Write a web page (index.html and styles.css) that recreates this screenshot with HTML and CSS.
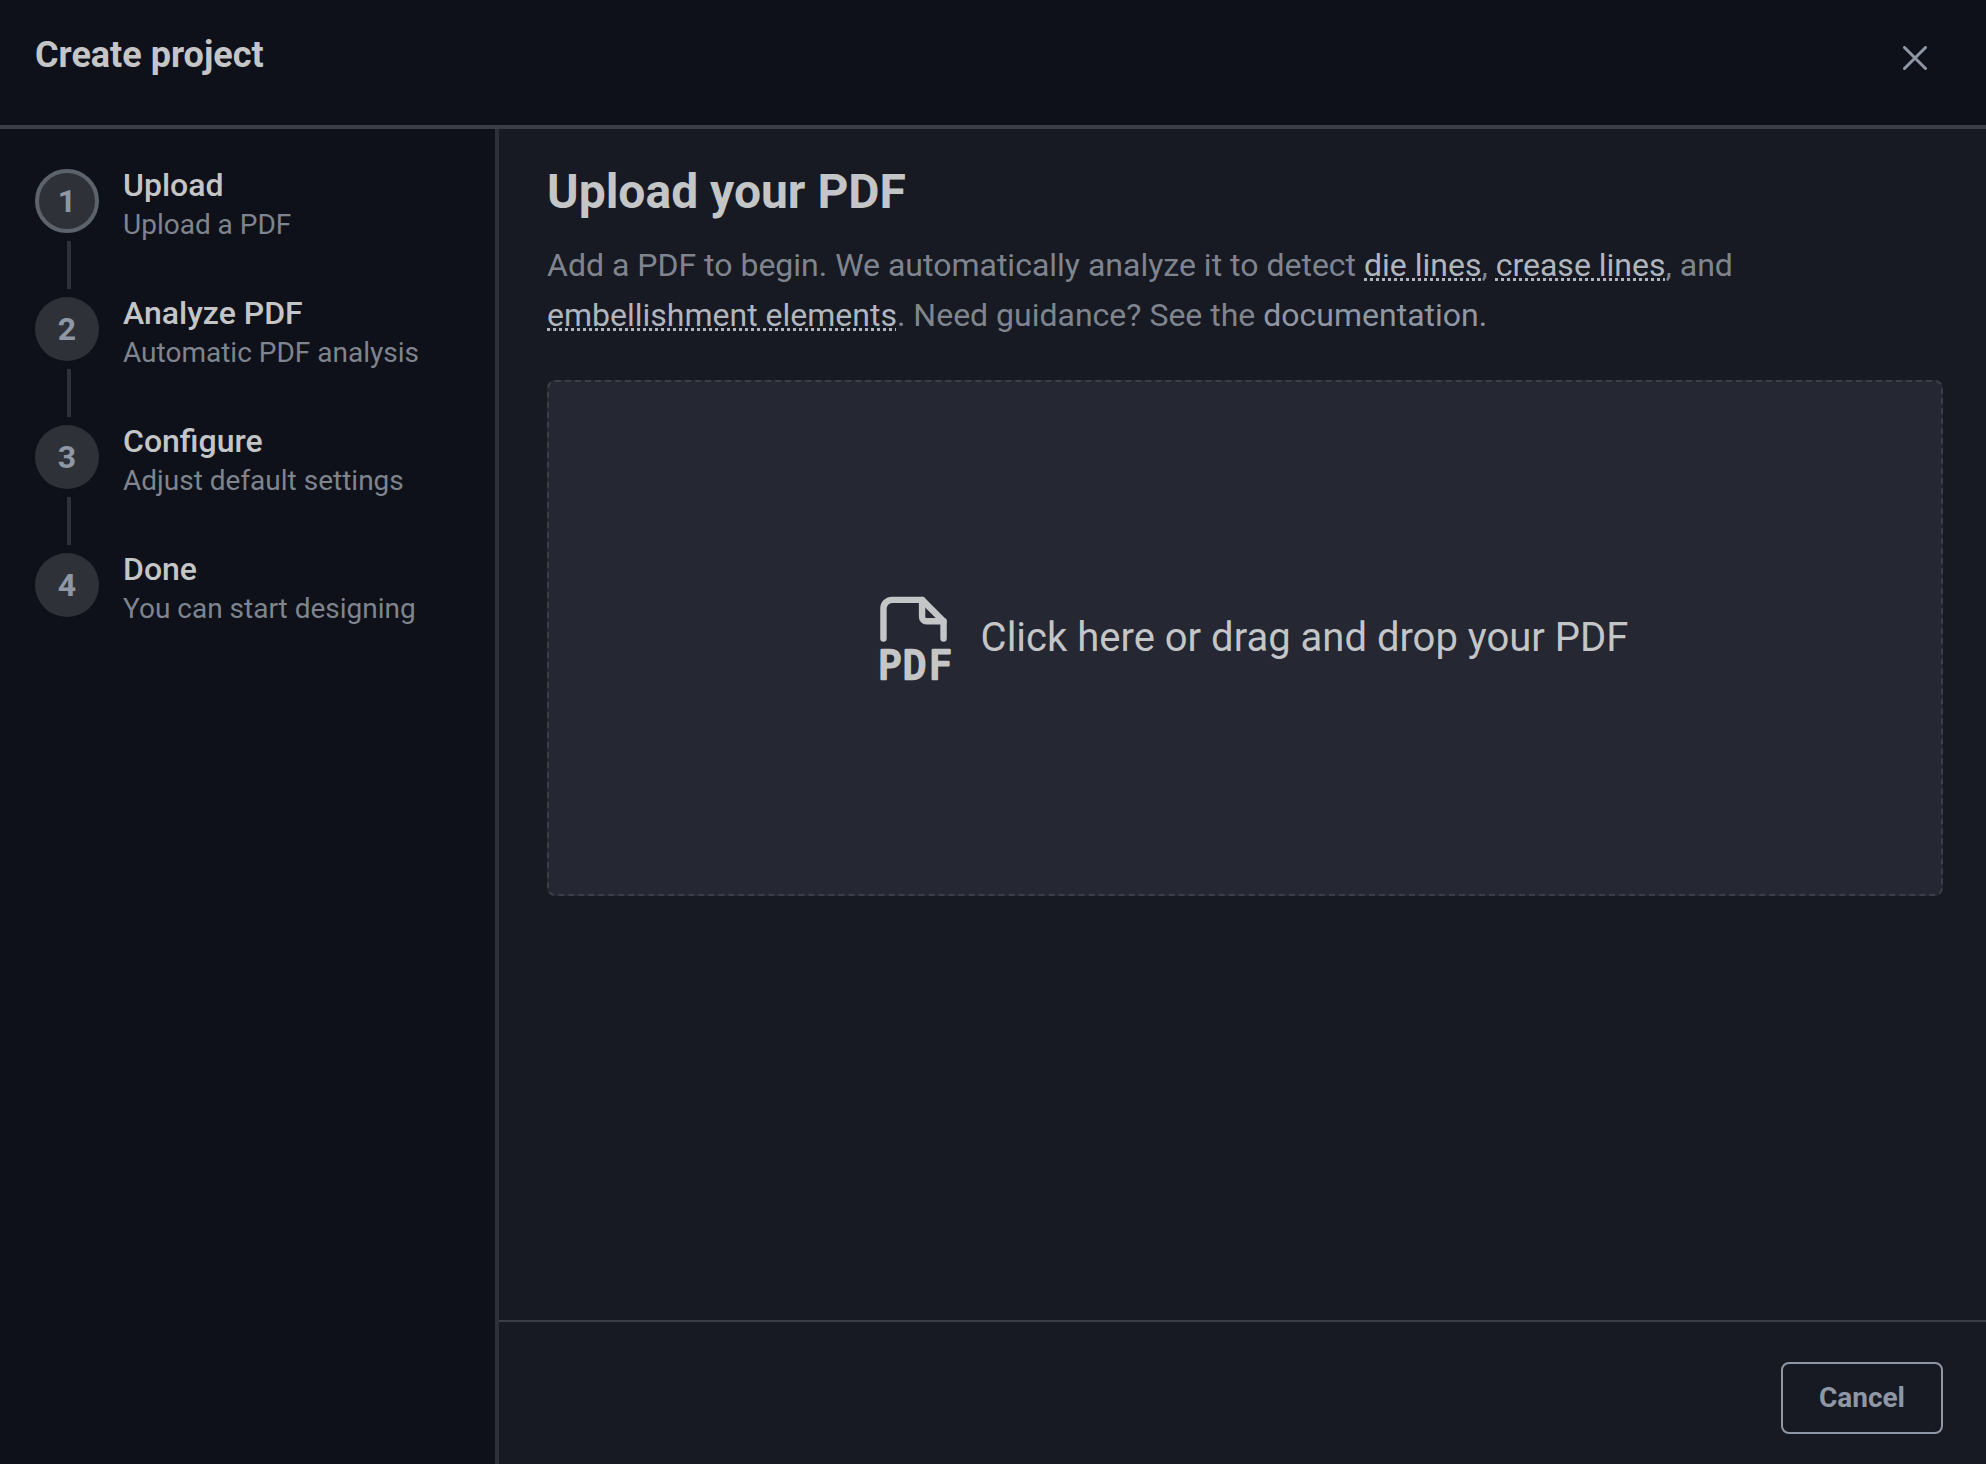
FILE: index.html
```html
<!DOCTYPE html>
<html lang="en">

<head>
    <meta charset="UTF-8">
    <meta name="viewport" content="width=device-width, initial-scale=1.0">
    <title>Create project</title>
    <link rel="stylesheet" href="styles.css">
</head>

<body>
    <div class="dialog">
        <header class="dialog-header">
            <h1>Create project</h1>
            <button type="button" class="close" aria-label="Close">
                <svg viewBox="0 0 24 24" aria-hidden="true">
                    <path d="M1.5 1.5l21 21M22.5 1.5l-21 21" />
                </svg>
            </button>
        </header>

        <div class="dialog-body">
            <nav class="sidebar" aria-label="Steps">
                <ol class="steps">
                    <li class="step active" aria-current="step">
                        <span class="step-number">1</span>
                        <div class="step-text">
                            <h3>Upload</h3>
                            <p>Upload a PDF</p>
                        </div>
                    </li>
                    <li class="step">
                        <span class="step-number">2</span>
                        <div class="step-text">
                            <h3>Analyze PDF</h3>
                            <p>Automatic PDF analysis</p>
                        </div>
                    </li>
                    <li class="step">
                        <span class="step-number">3</span>
                        <div class="step-text">
                            <h3>Configure</h3>
                            <p>Adjust default settings</p>
                        </div>
                    </li>
                    <li class="step">
                        <span class="step-number">4</span>
                        <div class="step-text">
                            <h3>Done</h3>
                            <p>You can start designing</p>
                        </div>
                    </li>
                </ol>
            </nav>

            <div class="panel">
                <main class="content">
                    <h2>Upload your PDF</h2>
                    <p class="intro">Add a PDF to begin. We automatically analyze it to detect <span class="term" tabindex="0">die lines</span>, <span class="term" tabindex="0">crease lines</span>, and <span class="term" tabindex="0">embellishment elements</span>. Need guidance? See the <a href="#documentation">documentation.</a></p>

                    <label class="dropzone" for="pdf-file">
                        <input type="file" id="pdf-file" name="pdf-file" accept="application/pdf">
                        <svg class="pdf-icon" viewBox="0 0 24 24" aria-hidden="true">
                            <path d="M14 3v4a1 1 0 0 0 1 1h4" />
                            <path d="M5 12v-7a2 2 0 0 1 2 -2h7l5 5v4" />
                            <text x="3.7 9.6 15.5" y="21.4">PDF</text>
                        </svg>
                        <span>Click here or drag and drop your PDF</span>
                    </label>
                </main>

                <footer class="actions">
                    <button type="button" class="cancel">Cancel</button>
                </footer>
            </div>
        </div>
    </div>
</body>

</html>
```
FILE: styles.css
```css
* {
    padding: 0;
    margin: 0;
    box-sizing: border-box;
}

body {
    font-family: Roboto, sans-serif;
    background-color: #0e1119;
    color: #c4c5c7;
}

button {
    font-family: inherit;
    background: none;
    cursor: pointer;
}

.dialog {
    min-height: 100vh;
    display: flex;
    flex-direction: column;
}

/* Header */
.dialog-header {
    padding: 33px 43px 47px 35px;
    display: flex;
    justify-content: space-between;
    align-items: flex-start;
    border-bottom: 4px solid #3c3e47;
}

.dialog-header h1 {
    font-size: 36px;
    line-height: 45px;
    font-weight: 700;
}

.close {
    padding: 16px;
    margin: -3px 0 -16px;
    border: none;
    display: flex;
    color: #8f97a5;
}

.close svg {
    width: 24px;
    height: 24px;
    fill: none;
    stroke: currentColor;
    stroke-width: 3;
    stroke-linecap: round;
}

.dialog-body {
    flex: 1;
    display: flex;
}

/* Steps */
.sidebar {
    flex: 0 0 499px;
    padding: 40px 35px;
    border-right: 4px solid #2e3138;
}

.steps {
    list-style: none;
    display: flex;
    flex-direction: column;
    gap: 64px;
}

.step {
    position: relative;
    height: 64px;
    display: flex;
    align-items: flex-start;
    gap: 24px;
}

.step-number {
    width: 64px;
    height: 64px;
    display: flex;
    justify-content: center;
    align-items: center;
    border-radius: 50%;
    background-color: #2e3138;
    color: #8f97a5;
    font-size: 32px;
    line-height: 40px;
    font-weight: 700;
}

.active .step-number {
    border: 4px solid #5d636d;
}

/* connector to the next step */
.step:not(:last-child)::after {
    content: "";
    position: absolute;
    top: 72px;
    left: 32px;
    width: 4px;
    height: 48px;
    background-color: #2e3138;
}

.step-text h3 {
    margin-bottom: 4px;
    font-size: 32px;
    line-height: 32px;
    font-weight: 500;
}

.step-text p {
    font-size: 28px;
    line-height: 40px;
    color: #7f848e;
}

/* Main panel */
.panel {
    flex: 1;
    display: flex;
    flex-direction: column;
    background-color: #171a22;
}

.content {
    flex: 1;
    padding: 31px 43px 40px 48px;
}

.content h2 {
    font-size: 48px;
    line-height: 64px;
    font-weight: 700;
}

.intro {
    margin: 16px 0 40px;
    font-size: 32px;
    line-height: 50px;
    color: #7f848e;
}

.term {
    color: #b1b6be;
    text-decoration: underline dotted 3px;
    cursor: help;
}

.intro a {
    color: #9097a3;
    text-decoration: none;
}

.dropzone {
    min-height: 516px;
    display: flex;
    justify-content: center;
    align-items: center;
    gap: 16px;
    border: 2px dashed #3c3e47;
    border-radius: 8px;
    background-color: #252732;
    font-size: 40px;
    line-height: 48px;
    cursor: pointer;
}

.dropzone input {
    position: absolute;
    width: 1px;
    height: 1px;
    opacity: 0;
}

.pdf-icon {
    width: 103px;
    height: 103px;
    fill: none;
    stroke: currentColor;
    stroke-width: 1.5;
    stroke-linecap: round;
    stroke-linejoin: round;
}

.pdf-icon text {
    font-family: "DejaVu Sans Mono", monospace;
    font-size: 9px;
    fill: currentColor;
    stroke-width: 0.6;
}

/* Footer */
.actions {
    padding: 40px 43px 30px;
    display: flex;
    justify-content: flex-end;
    border-top: 2px solid #3c3e47;
}

.cancel {
    padding: 16px 36px;
    border: 2px solid #8f97a5;
    border-radius: 8px;
    color: #8f97a5;
    font-size: 28px;
    line-height: 36px;
    font-weight: 700;
}

.cancel:hover,
.close:hover {
    color: #c4c5c7;
}
```
